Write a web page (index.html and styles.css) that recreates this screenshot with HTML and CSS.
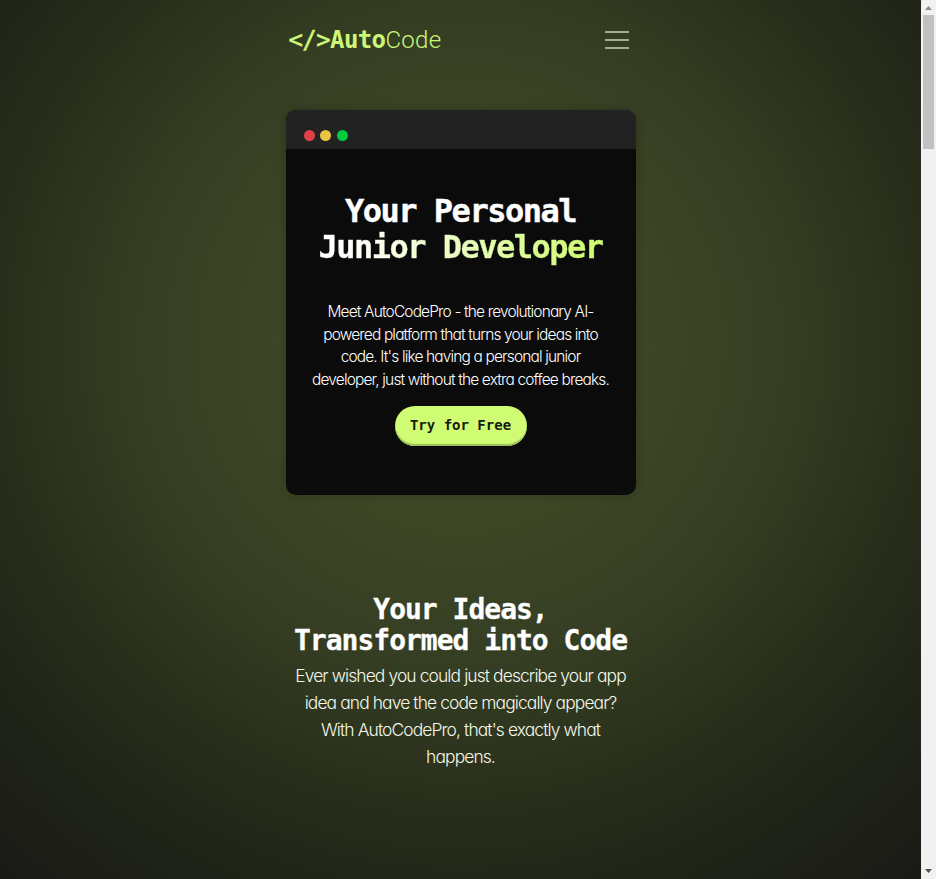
FILE: index.html
```html
<!DOCTYPE html>
<html lang="en">
<head>
<meta charset="utf-8">
<title>AutoCode</title>
<link rel="stylesheet" href="styles.css">
</head>
<body>
<div class="page">
  <div class="column">
    <header class="nav">
      <a class="logo"><span class="mark">&lt;/&gt;</span><b>Auto</b><span class="thin">Code</span></a>
      <div class="menu"><i></i><i></i><i></i></div>
    </header>
    <section class="window">
      <div class="titlebar"><i class="dot red"></i><i class="dot yellow"></i><i class="dot green"></i></div>
      <div class="hero">
        <h1>Your Personal<br><span class="fade">Junior Developer</span></h1>
        <p>Meet AutoCodePro - the revolutionary AI-<br>powered platform that turns your ideas into<br>code. It's like having a personal junior<br>developer, just without the extra coffee breaks.</p>
        <a class="cta">Try for Free</a>
      </div>
    </section>
    <section class="ideas">
      <h2>Your Ideas,<br>Transformed into Code</h2>
      <p>Ever wished you could just describe your app<br>idea and have the code magically appear?<br>With AutoCodePro, that's exactly what<br>happens.</p>
    </section>
  </div>
</div>
<div class="scrollbar">
  <svg width="15" height="15" viewBox="0 0 15 15"><path d="M4 10h7L7.500 6z" fill="#8b8b8b"/></svg>
  <div class="thumb"></div>
  <svg class="down" width="15" height="15" viewBox="0 0 15 15"><path d="M4 5h7L7.500 9z" fill="#505050"/></svg>
</div>
</body>
</html>
```
FILE: styles.css
```css
* { box-sizing: border-box; }
body {
  margin: 0;
  height: 879px;
  display: flex;
  overflow: hidden;
  color: #fff;
  font-family: Inter, sans-serif;
}
.page {
  flex: 1;
  height: 879px;
  background: radial-gradient(ellipse 640px 640px at 50% 39%, #404a26 0%, #3d4725 28%, #353e23 50%, #292e1b 72%, #222719 84%, #191a16 110%);
}
.column { width: 350px; margin: 0 auto; }
.nav {
  height: 110px;
  padding: 24px 7px 0 3px;
  display: flex;
  justify-content: space-between;
  align-items: flex-start;
}
.logo {
  font: 24px/32px "DejaVu Sans Mono", monospace;
  letter-spacing: -0.6px;
  color: #cdf777;
  white-space: nowrap;
}
.mark { -webkit-text-stroke: 0.5px #cdf777; }
.thin { font-family: Roboto, sans-serif; font-weight: 300; font-size: 24px; letter-spacing: 0.3px; }
.menu { width: 24px; padding-top: 7px; display: grid; gap: 6px; }
.menu i { height: 2px; background: #a3ad8f; }
.window {
  height: 385px;
  border-radius: 10px;
  background: #0b0b0b;
  overflow: hidden;
  box-shadow: 0 0 10px rgba(0, 0, 0, 0.22);
}
.titlebar {
  height: 39px;
  padding: 20px 0 0 18px;
  display: flex;
  background: #222;
}
.dot { width: 11px; height: 11px; border-radius: 50%; }
.red { background: #e04144; }
.yellow { background: #e8c545; margin-left: 5px; }
.green { background: #00ca3d; margin-left: 6px; }
.hero {
  padding-top: 44px;
  display: flex;
  flex-direction: column;
  align-items: center;
  text-align: center;
}
h1, h2, p { margin: 0; white-space: nowrap; text-align: center; }
h1 {
  font: bold 32px/36px "DejaVu Sans Mono", monospace;
  letter-spacing: -1.5px;
  -webkit-text-stroke: 0.4px currentColor;
}
.fade {
  background: linear-gradient(90deg, #fff 10%, #d0fc74 95%);
  background-clip: text;
  -webkit-background-clip: text;
  color: transparent;
}
p { font-weight: 300; font-feature-settings: "cv11"; }
.hero p {
  margin-top: 36.4px;
  font-size: 15.5px;
  line-height: 22.4px;
  letter-spacing: -0.86px;
}
.cta {
  margin-top: 14.6px;
  width: 132px;
  height: 40px;
  border-radius: 20px;
  background: #d0fc74;
  box-shadow: inset 0 -2px 1px #9dbe5b;
  color: #171b0d;
  font: bold 14px/38px "DejaVu Sans Mono", monospace;
}
.ideas { padding-top: 99px; }
h2 {
  font: bold 28px/31px "DejaVu Sans Mono", monospace;
  letter-spacing: -1px;
  -webkit-text-stroke: 0.3px currentColor;
}
.ideas p {
  margin-top: 6px;
  font-size: 17.4px;
  line-height: 27px;
  letter-spacing: -0.88px;
  color: #f4f8ea;
}
.scrollbar {
  width: 15px;
  height: 879px;
  background: #f1f1f1;
  display: flex;
  flex-direction: column;
}
.thumb { width: 11px; height: 134px; margin-left: 2px; background: #c1c1c1; }
.down { margin-top: auto; }
```
